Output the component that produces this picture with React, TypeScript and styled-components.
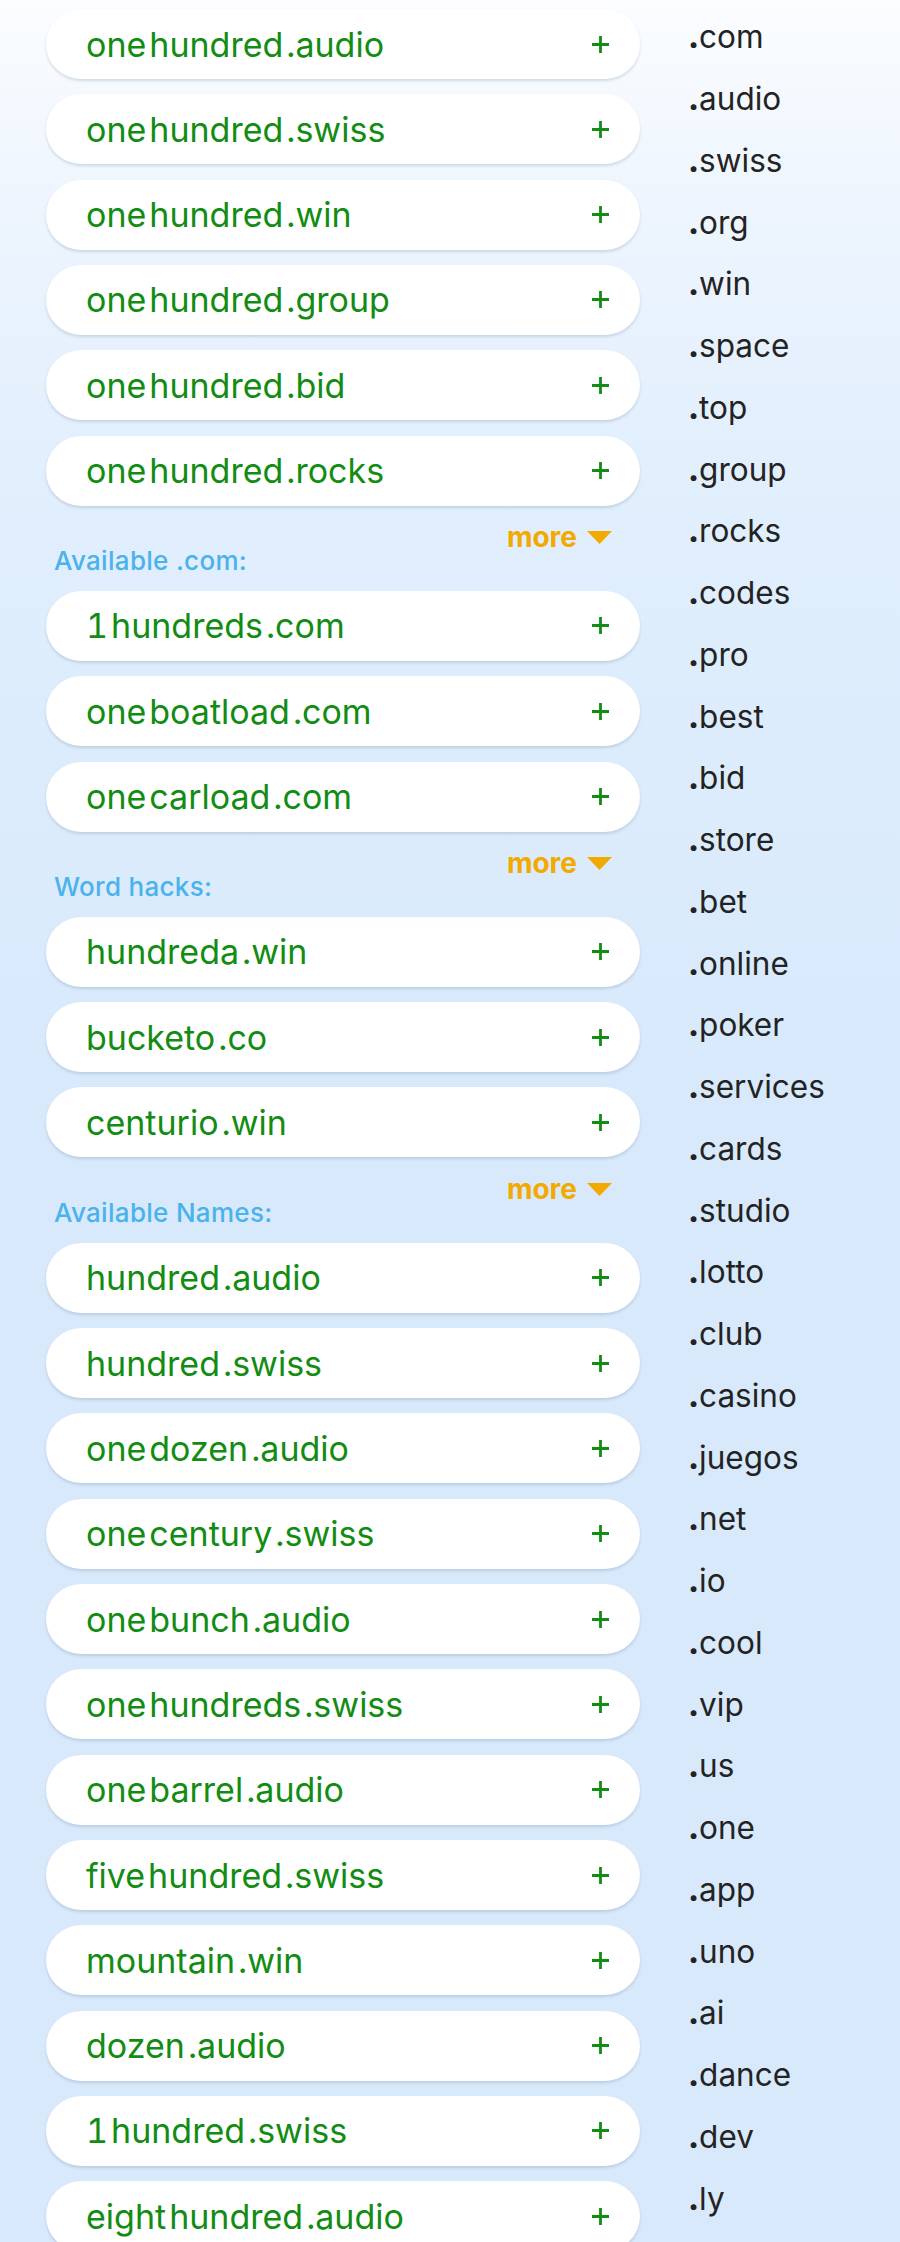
import React from "react";
import styled, { createGlobalStyle } from "styled-components";

const Global = createGlobalStyle`
  html, body { margin: 0; padding: 0; }
  body {
    background: #d8e9fc;
    font-family: Inter, "Noto Sans", "Liberation Sans", sans-serif;
    -webkit-font-smoothing: antialiased;
  }
`;

const Page = styled.div`
  display: grid;
  grid-template-columns: 594px 1fr;
  column-gap: 48px;
  padding-left: 46px;
  min-height: 2242px;
  background: linear-gradient(
    180deg,
    #fbfdff 0px,
    #eef5fe 200px,
    #e2effd 450px,
    #dcecfc 750px,
    #d8e9fc 1100px,
    #d8e9fc 100%
  );
`;

const LeftColumn = styled.div`
  display: flex;
  flex-direction: column;
  gap: 15.33px;
  padding-top: 9px;
`;

const Pill = styled.div`
  height: 70px;
  flex: none;
  border-radius: 35px;
  background: #fff;
  box-shadow: 0 2px 3px rgba(70, 100, 130, 0.2);
  display: flex;
  align-items: center;
  justify-content: space-between;
  padding: 0 31px 0 40px;
  box-sizing: border-box;
`;

const Name = styled.div`
  font-size: 34px;
  color: #128c12;
  white-space: nowrap;
  display: flex;
  font-variant-numeric: tabular-nums;
`;

const Part = styled.span<{ $first?: boolean }>`
  margin-left: ${(p) => (p.$first ? "0" : "3px")};
`;

const Header = styled.div`
  height: 54.6px;
  flex: none;
  display: flex;
  flex-direction: column;
  padding-top: 1.5px;
  box-sizing: border-box;
`;

const MoreRow = styled.div`
  height: 30px;
  display: flex;
  justify-content: flex-end;
  align-items: center;
  gap: 10px;
  padding-right: 28px;
  font-size: 28px;
  font-weight: 700;
  color: #f2a900;
`;

const Label = styled.div`
  margin-top: -2px;
  padding-left: 8px;
  font-size: 26px;
  letter-spacing: 0.3px;
  line-height: 22px;
  font-weight: 500;
  color: #4ab2ec;
`;

const RightColumn = styled.div`
  display: flex;
  flex-direction: column;
  padding-top: 6.3px;
`;

const Tld = styled.div`
  height: 61.76px;
  line-height: 61.76px;
  font-size: 31.5px;
  color: #232323;
  white-space: nowrap;
`;

const Dot = styled.span`
  font-weight: 800;
`;

const Plus = () => (
  <svg width="17" height="17" viewBox="0 0 17 17">
    <path d="M8.5 0 V17 M0 8.5 H17" stroke="#128c12" strokeWidth="2.8" fill="none" />
  </svg>
);

const Triangle = () => (
  <svg width="25" height="13" viewBox="0 0 25 13">
    <polygon points="0,0 25,0 12.5,13" fill="#f2a900" />
  </svg>
);

type Section = { label?: string; names: string[][] };

const sections: Section[] = [
  {
    names: [
      ["one", "hundred", ".audio"],
      ["one", "hundred", ".swiss"],
      ["one", "hundred", ".win"],
      ["one", "hundred", ".group"],
      ["one", "hundred", ".bid"],
      ["one", "hundred", ".rocks"],
    ],
  },
  {
    label: "Available .com:",
    names: [
      ["1", "hundreds", ".com"],
      ["one", "boatload", ".com"],
      ["one", "carload", ".com"],
    ],
  },
  {
    label: "Word hacks:",
    names: [
      ["hundreda", ".win"],
      ["bucketo", ".co"],
      ["centurio", ".win"],
    ],
  },
  {
    label: "Available Names:",
    names: [
      ["hundred", ".audio"],
      ["hundred", ".swiss"],
      ["one", "dozen", ".audio"],
      ["one", "century", ".swiss"],
      ["one", "bunch", ".audio"],
      ["one", "hundreds", ".swiss"],
      ["one", "barrel", ".audio"],
      ["five", "hundred", ".swiss"],
      ["mountain", ".win"],
      ["dozen", ".audio"],
      ["1", "hundred", ".swiss"],
      ["eight", "hundred", ".audio"],
    ],
  },
];

const tlds = [
  "com", "audio", "swiss", "org", "win", "space", "top", "group", "rocks",
  "codes", "pro", "best", "bid", "store", "bet", "online", "poker", "services",
  "cards", "studio", "lotto", "club", "casino", "juegos", "net", "io", "cool",
  "vip", "us", "one", "app", "uno", "ai", "dance", "dev", "ly",
];

export default function App() {
  return (
    <>
      <Global />
      <Page>
        <LeftColumn>
          {sections.map((s, si) => (
            <React.Fragment key={si}>
              {s.label && (
                <Header>
                  <MoreRow>
                    <span>more</span>
                    <Triangle />
                  </MoreRow>
                  <Label>{s.label}</Label>
                </Header>
              )}
              {s.names.map((parts, ni) => (
                <Pill key={ni}>
                  <Name>
                    {parts.map((p, pi) => (
                      <Part key={pi} $first={pi === 0}>
                        {p}
                      </Part>
                    ))}
                  </Name>
                  <Plus />
                </Pill>
              ))}
            </React.Fragment>
          ))}
        </LeftColumn>
        <RightColumn>
          {tlds.map((t) => (
            <Tld key={t}>
              <Dot>.</Dot>
              {t}
            </Tld>
          ))}
        </RightColumn>
      </Page>
    </>
  );
}
